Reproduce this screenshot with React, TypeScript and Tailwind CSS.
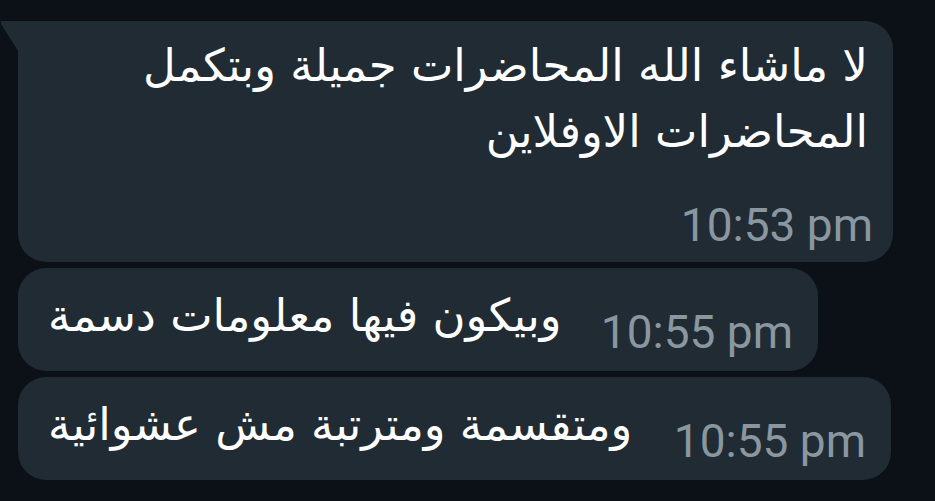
const arabic = { fontFamily: '"DejaVu Sans", "Noto Sans", sans-serif' };

const Time = ({ value }: { value: string }) => (
  <span className="font-['Roboto',sans-serif] text-[46px] leading-none text-[#8a97a0] whitespace-nowrap">
    {value}
  </span>
);

export default function App() {
  return (
    <div className="w-[935px] h-[501px] bg-[#0b1116] overflow-hidden">
      <div className="flex flex-col gap-[6px] pt-[21px] pl-[18px]">
        {/* first message with tail */}
        <div className="relative w-[875px] h-[241px] bg-[#202b33] rounded-[28px] rounded-tl-none">
          <svg
            className="absolute -left-[18px] top-0"
            width="18"
            height="30"
            viewBox="0 0 18 30"
          >
            <path d="M2 0 H18 V30 L1.2 3.2 Q0 0 2 0 Z" fill="#202b33" />
          </svg>
          <div className="flex flex-col h-full pr-[25px] pt-[12px] pb-[14px]">
            <p
              dir="rtl"
              className="text-[45px] leading-[66px] text-white text-right"
              style={arabic}
            >
              لا ماشاء الله المحاضرات جميلة وبتكمل
              <br />
              المحاضرات الاوفلاين
            </p>
            <div className="mt-auto flex justify-end -mr-[5px]">
              <Time value="10:53 pm" />
            </div>
          </div>
        </div>

        <div className="w-[800px] h-[103px] bg-[#202b33] rounded-[28px] flex items-center justify-between pl-[30px] pr-[25px]">
          <span dir="rtl" className="text-[45px] text-white -mt-[8px]" style={arabic}>
            وبيكون فيها معلومات دسمة
          </span>
          <span className="mt-[24px]">
            <Time value="10:55 pm" />
          </span>
        </div>

        <div className="w-[873px] h-[103px] bg-[#202b33] rounded-[28px] flex items-center justify-between pl-[30px] pr-[25px]">
          <span dir="rtl" className="text-[45px] text-white -mt-[8px]" style={arabic}>
            ومتقسمة ومترتبة مش عشوائية
          </span>
          <span className="mt-[24px]">
            <Time value="10:55 pm" />
          </span>
        </div>
      </div>
    </div>
  );
}
